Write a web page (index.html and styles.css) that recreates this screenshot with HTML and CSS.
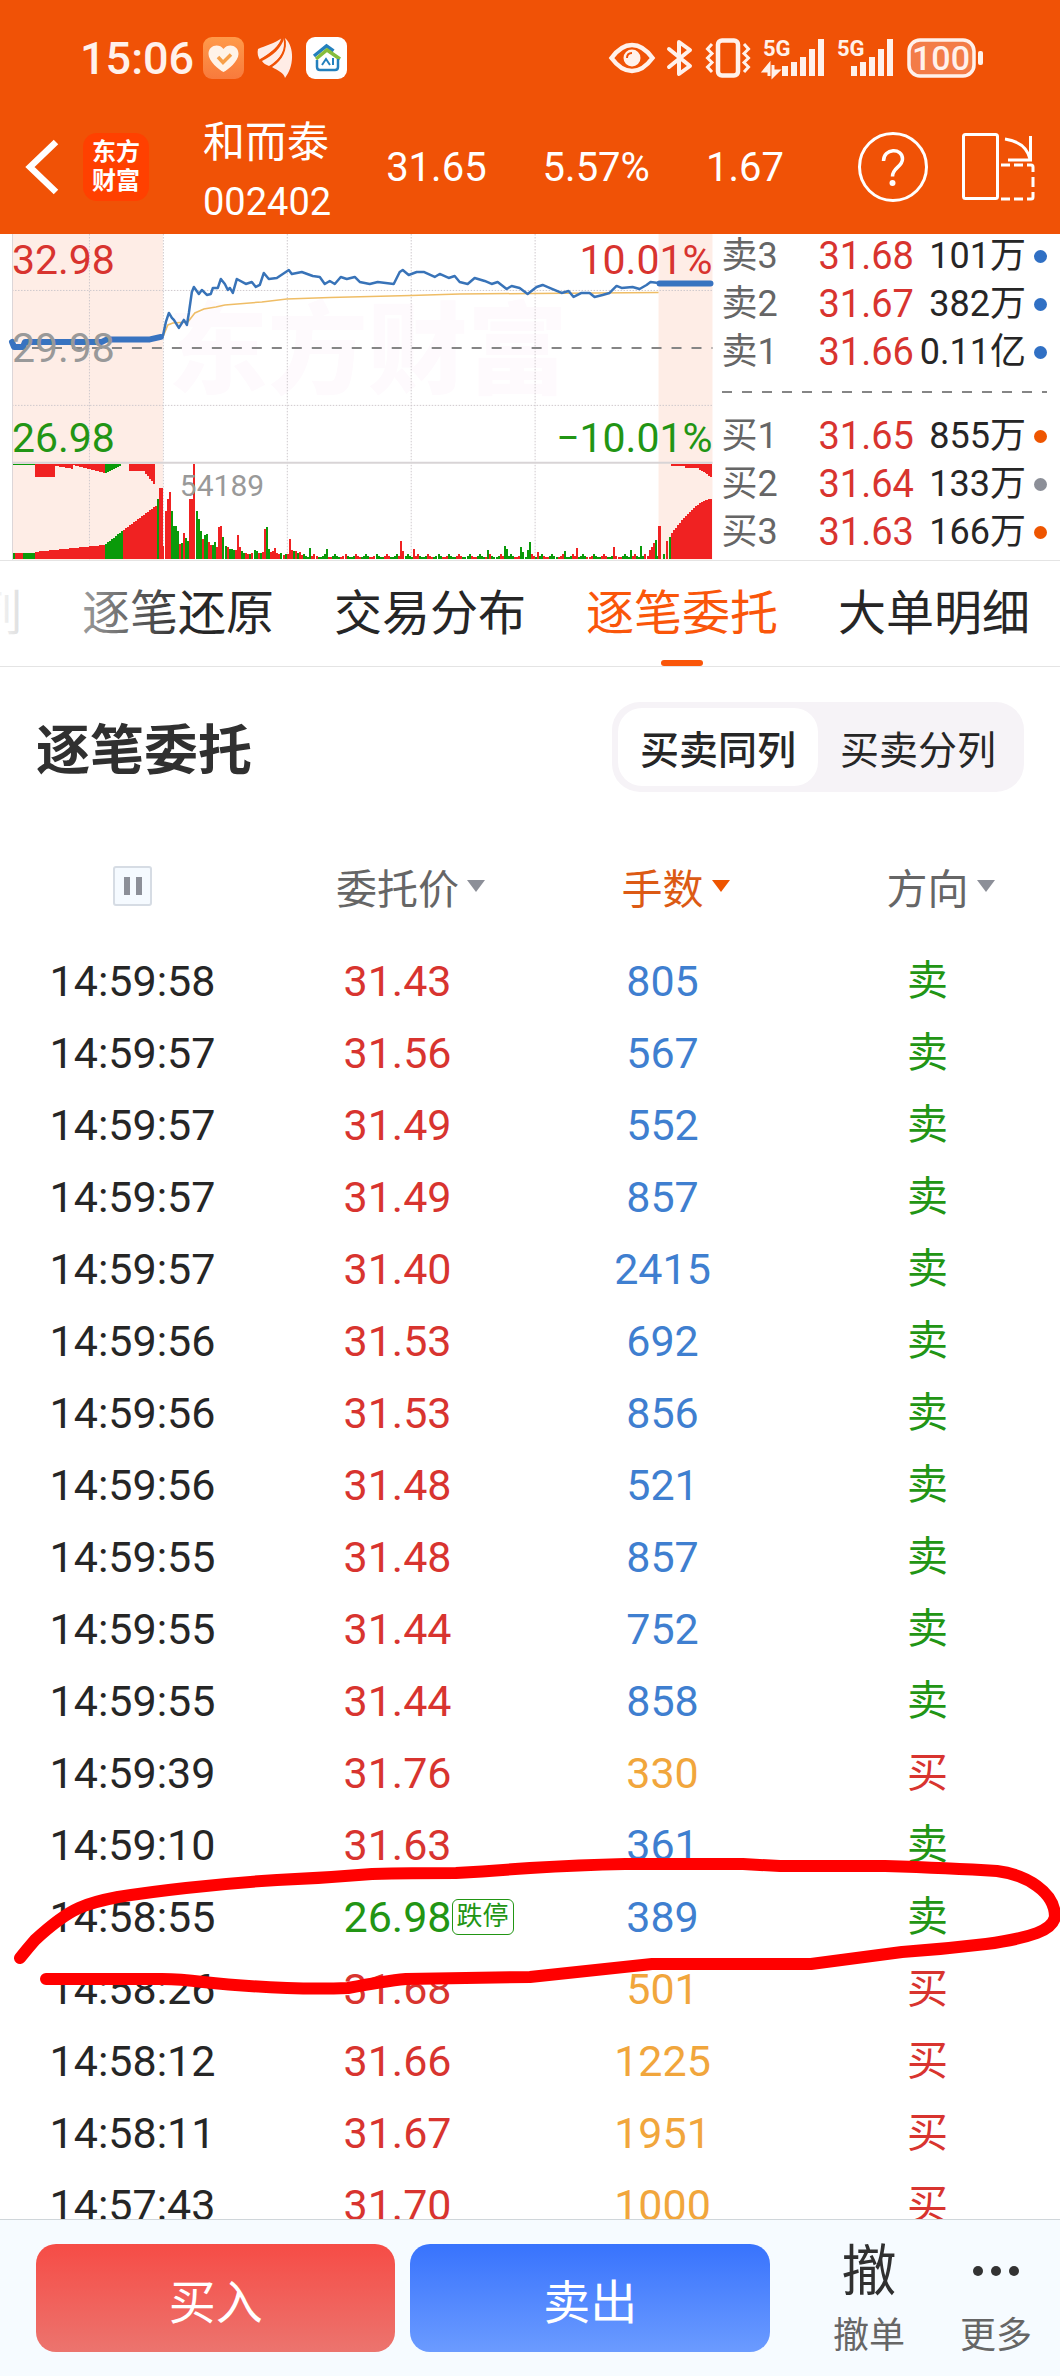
FILE: index.html
```html
<!DOCTYPE html>
<html lang="zh-Hans">
<head>
    <meta charset="UTF-8">
    <meta name="viewport" content="width=device-width, initial-scale=1.0">
    <title>和而泰 002402</title>
    <link rel="stylesheet" href="styles.css">
</head>
<body>
    <header class="top">
        <div class="status">
            <span class="clock">15:06</span>
            <div class="status-apps">
                <svg width="41" height="42" viewBox="0 0 41 42">
                    <defs>
                        <linearGradient id="heart-bg" x1="0" y1="0" x2="0" y2="1">
                            <stop offset="0" stop-color="#ff9a4a"/>
                            <stop offset="1" stop-color="#f87a3c"/>
                        </linearGradient>
                    </defs>
                    <rect width="41" height="42" rx="9" fill="url(#heart-bg)"/>
                    <path d="M20.500 35C16 33 5.500 24 5.500 17c0-9 10.500-11 15-5 4.500-6 15-4 15 5 0 7-10.500 16-15 18z" fill="#fff3e8"/>
                    <path d="M15 20l5 5.500 8-8" fill="none" stroke="#f7a04a" stroke-width="3.500"/>
                </svg>
                <svg width="36" height="42" viewBox="0 0 36 42">
                    <path d="M1 12C8 9 18 6 25 1c-2 8-12 15-22 22C1 20 0 16 1 12z" fill="#ffece6"/>
                    <path d="M5 24C15 19 25 11 27 1c4 9-3 21-15 28-3-1-6-3-7-5z" fill="#ffece6"/>
                    <path d="M15 30C26 23 31 12 28 1c10 9 9 29 0 40-1-5-8-8-13-11z" fill="#ffece6"/>
                    <path d="M3 23C14 17 23 10 25 1M13 30C24 23 30 12 27 1" fill="none" stroke="#f05206" stroke-width="1.500"/>
                </svg>
                <svg width="41" height="42" viewBox="0 0 41 42">
                    <rect width="41" height="42" rx="9" fill="#fff"/>
                    <path d="M8 19L20.500 9l7 5" fill="none" stroke="#2480bd" stroke-width="3.500"/>
                    <path d="M10 22l11-9 13 9" fill="none" stroke="#86bd3c" stroke-width="3.500"/>
                    <path d="M11 23v7q0 3 3 3h15q3 0 3-3v-8" fill="none" stroke="#2480bd" stroke-width="2.500"/>
                    <path d="M16 28l4-6 4 6M27 21v7" fill="none" stroke="#2480bd" stroke-width="2"/>
                </svg>
            </div>
            <div class="status-icons">
                <svg width="46" height="32" viewBox="0 0 46 32">
                    <path d="M2.500 16Q12 3 23 3t20.500 13Q34 29 23 29T2.500 16z" fill="none" stroke="#fff1eb" stroke-width="4.500"/>
                    <circle cx="23" cy="16" r="8.500" fill="#fff1eb"/>
                    <path d="M18 16q0-5 5-5" fill="none" stroke="#f05206" stroke-width="2"/>
                </svg>
                <svg width="26" height="38" viewBox="0 0 26 38">
                    <path d="M2 10l21 17-11 8V3l11 8L2 28" fill="none" stroke="#fff1eb" stroke-width="4" stroke-linejoin="round" stroke-linecap="round"/>
                </svg>
                <svg width="46" height="40" viewBox="0 0 46 40">
                    <rect x="13" y="2.500" width="20" height="35" rx="4" fill="none" stroke="#fff1eb" stroke-width="4.500"/>
                    <path d="M7 6L2.500 11 7 15.500 2.500 20 7 24.500 2.500 29 7 34M39 6l4.500 5-4.500 4.500 4.500 4.500-4.500 4.500 4.500 4.500-4.500 5" fill="none" stroke="#fff1eb" stroke-width="3"/>
                </svg>
                <svg width="62" height="40" viewBox="0 0 62 40">
                    <text class="net" x="0" y="18">5G</text>
                    <path d="M22 38V28M31 38V24M40 38V19M49 38V11M58 38V1" stroke="#fff1eb" stroke-width="6"/>
                    <path d="M6 38V27l-5 6h5M10 27v11l5-5h-5" fill="none" stroke="#fff1eb" stroke-width="3"/>
                </svg>
                <svg width="58" height="40" viewBox="0 0 58 40">
                    <text class="net" x="0" y="18">5G</text>
                    <path d="M17 38V28M26 38V24M35 38V19M44 38V11M53 38V1" stroke="#fff1eb" stroke-width="6"/>
                </svg>
                <svg width="77" height="40" viewBox="0 0 77 40">
                    <rect x="2" y="2" width="65" height="36" rx="11" fill="#f37c48" stroke="#fff1eb" stroke-width="3.500"/>
                    <rect x="71" y="13" width="5" height="14" rx="2" fill="#fff1eb"/>
                    <text class="battery" x="34" y="32" text-anchor="middle">100</text>
                </svg>
            </div>
        </div>
        <nav class="stock-bar">
            <button class="icon-btn" aria-label="返回">
                <svg width="34" height="56" viewBox="0 0 34 56"><path d="M31 3L5 28l26 25" fill="none" stroke="#fff" stroke-width="6.500"/></svg>
            </button>
            <a class="brand" href="#">东方<br>财富</a>
            <h1 class="stock">和而泰<br><span class="code">002402</span></h1>
            <div class="quote">
                <span>31.65</span>
                <span>5.57%</span>
                <span>1.67</span>
            </div>
            <button class="icon-btn help" aria-label="帮助">
                <svg width="70" height="70" viewBox="0 0 70 70">
                    <circle cx="35" cy="35" r="33.500" fill="none" stroke="#fff" stroke-width="3"/>
                    <path d="M25.500 29c0-13 19-13.500 19-2 0 8-10 8.500-10 17.500" fill="none" stroke="#fff" stroke-width="3.500"/>
                    <circle cx="34.500" cy="51" r="3" fill="#fff"/>
                </svg>
            </button>
            <button class="icon-btn" aria-label="横屏">
                <svg width="73" height="68" viewBox="0 0 73 68" fill="none" stroke="#fff" stroke-width="3">
                    <rect x="1.500" y="1.500" width="34" height="64" rx="2"/>
                    <path d="M43 6q21 3 25 20M68.500 3v24H46"/>
                    <path d="M39 32h9m4 0h9m4 0h4q2 0 2 2v5m0 5v10m0 5v5q0 2-2 2h-4m-4 0h-9m-4 0h-9"/>
                </svg>
            </button>
        </nav>
    </header>

    <section class="market">
        <svg class="chart" viewBox="0 -4 716 326">
            <rect x="12" y="-4" width="151" height="326" fill="#feede6"/>
            <rect x="659" y="-4" width="54" height="326" fill="#feede6"/>
            <text class="watermark" x="168" y="148">东方财富</text>
            <path d="M89.500-4v326M163.500-4v326M287.500-4v326M411.500-4v326M535.500-4v326M12 52.500h701M12 167.500h701" stroke="#cfc9cd" stroke-dasharray="1.500 1.500" fill="none"/>
            <path d="M12.500-4v326" stroke="#dcd6d8"/>
            <path d="M12 110h701" stroke="#858585" stroke-width="2" stroke-dasharray="10 10"/>
            <path d="M12 225h701" stroke="#d8d4d6" stroke-width="2"/>
            <g id="volume" shape-rendering="crispEdges"></g>
            <path d="M163 99L168 87 173 85 188 84 195 75 204 71 216 69 225 67 262 64 287 61 330 59.500 411 57.500 460 56 535 55.500 659 54.500" fill="none" stroke="#efbd66" stroke-width="1.500"/>
            <path id="price-line" fill="none" stroke="#3873b8" stroke-width="2.500" stroke-linejoin="round"/>
            <path d="M12 104L14 109H23L25 104H102L107 101.500H150L161 99M660 45.500H711" fill="none" stroke="#3873c0" stroke-width="6" stroke-linecap="round" stroke-linejoin="round"/>
            <text class="axis up" x="12" y="36">32.98</text>
            <text class="axis flat" x="12" y="124">29.98</text>
            <text class="axis down" x="12" y="214">26.98</text>
            <text class="axis up" x="713" y="36" text-anchor="end">10.01%</text>
            <text class="axis down" x="713" y="214" text-anchor="end">−10.01%</text>
            <text class="axis-small" x="180" y="258">54189</text>
        </svg>
        <div class="book">
            <ul>
                <li><span>卖3</span><b>31.68</b><em>101万</em><i class="dot blue"></i></li>
                <li><span>卖2</span><b>31.67</b><em>382万</em><i class="dot blue"></i></li>
                <li><span>卖1</span><b>31.66</b><em>0.11亿</em><i class="dot blue"></i></li>
            </ul>
            <div class="split"></div>
            <ul>
                <li><span>买1</span><b>31.65</b><em>855万</em><i class="dot orange"></i></li>
                <li><span>买2</span><b>31.64</b><em>133万</em><i class="dot gray"></i></li>
                <li><span>买3</span><b>31.63</b><em>166万</em><i class="dot orange"></i></li>
            </ul>
        </div>
    </section>

    <nav class="tabs">
        <a href="#">列</a>
        <a href="#">逐笔还原</a>
        <a href="#">交易分布</a>
        <a href="#" class="active">逐笔委托</a>
        <a href="#">大单明细</a>
    </nav>

    <main class="orders">
        <div class="orders-head">
            <h2>逐笔委托</h2>
            <div class="switch">
                <button class="on">买卖同列</button>
                <button>买卖分列</button>
            </div>
        </div>
        <table>
            <thead>
                <tr>
                    <th><button class="pause" aria-label="暂停"></button></th>
                    <th><button class="sort">委托价</button></th>
                    <th><button class="sort active">手数</button></th>
                    <th><button class="sort">方向</button></th>
                </tr>
            </thead>
            <tbody id="order-rows"></tbody>
        </table>
        <!-- 手绘红圈 -->
        <svg class="mark" viewBox="0 0 1060 160">
            <path d="M20 108Q28 98 35 90 61 66 79 58 92 52 118 47 150 42 186 38 230 33 277 30 325 28 372 24 410 23 456 23 490 21 530 18 580 15 625 14H743L780 16H885Q950 18 997 21 1021 24 1037 36 1055 49 1055 67 1053 77 1037 83 1018 90 986 94 945 99 902 102L811 114H652L530 127 406 129Q385 131 348 138 320 139 287 138 240 136 203 132 180 129 162 129H46"/>
        </svg>
    </main>

    <footer class="actions">
        <button class="trade buy">买入</button>
        <button class="trade sell">卖出</button>
        <a class="action" href="#"><strong>撤</strong>撤单</a>
        <a class="action" href="#">
            <svg width="52" height="56" viewBox="0 0 52 56" fill="#333"><circle cx="8" cy="27" r="5"/><circle cx="26" cy="27" r="5"/><circle cx="44" cy="27" r="5"/></svg>
            更多
        </a>
    </footer>

    <script src="script.js"></script>
</body>
</html>
```
FILE: styles.css
```css
/* 全局 */
* {
    box-sizing: border-box;
}

body {
    margin: 0;
    height: 100vh;
    display: flex;
    flex-direction: column;
    font-family: Roboto, "Noto Sans CJK SC", sans-serif;
    color: #262626;
    background: #fff;
}

button {
    margin: 0;
    padding: 0;
    border: 0;
    background: none;
    font: inherit;
    color: inherit;
}

a {
    color: inherit;
    text-decoration: none;
}

svg {
    display: block;
    flex: none;
    overflow: visible;
}

/* 顶部 */
.top {
    flex: none;
    background: #f05206;
    color: #fff;
}

.status {
    display: flex;
    align-items: center;
    height: 100px;
    padding: 16px 76px 0 80px;
}

.clock {
    width: 123px;
    font-size: 45px;
    font-weight: 500;
    color: #fff1eb;
}

.status-apps {
    display: flex;
    gap: 13px;
}

.status-icons {
    display: flex;
    align-items: center;
    gap: 12px;
    margin-left: auto;
}

.net {
    font-size: 22px;
    font-weight: 700;
    fill: #fff1eb;
}

.battery {
    font-size: 34px;
    font-weight: 500;
    fill: #fff1eb;
}

.stock-bar {
    display: flex;
    align-items: center;
    height: 134px;
    padding: 0 25px;
}

.brand {
    margin-left: 24px;
    width: 66px;
    height: 68px;
    padding: 5px 0;
    border-radius: 14px;
    background: #ff4000;
    font-size: 24px;
    font-weight: 700;
    line-height: 29px;
    text-align: center;
}

.stock {
    margin: 0 0 0 54px;
    padding-top: 10px;
    font-size: 42px;
    font-weight: 400;
    line-height: 58px;
}

.code {
    font-size: 38px;
}

.quote {
    display: flex;
    gap: 56px;
    margin-left: 55px;
    font-size: 40px;
}

.help {
    margin-left: auto;
    margin-right: 34px;
}

/* 分时图与盘口 */
.market {
    flex: none;
    display: flex;
    border-bottom: 1px solid #e4e4e4;
}

.chart {
    width: 67.5%;
    overflow: hidden;
}

.axis {
    font-size: 41px;
}

.axis-small {
    font-size: 30px;
    fill: #999;
}

.watermark {
    font-size: 100px;
    font-weight: 900;
    fill: #fefafd;
}

.up { fill: #d8342f; }
.down { fill: #229514; }
.flat { fill: #999; }

.book {
    flex: 1;
    padding: 4px 13px 0 6px;
}

.book ul {
    list-style: none;
    margin: 0;
    padding: 0;
    display: grid;
    gap: 12px;
}

.book li {
    display: flex;
    align-items: center;
    height: 36px;
    line-height: 36px;
    font-size: 36px;
}

.book span {
    width: 97px;
    color: #666;
}

.book b {
    font-size: 38px;
    font-weight: 400;
    color: #d8342f;
}

.book em {
    flex: 1;
    text-align: right;
    font-style: normal;
    white-space: nowrap;
}

.dot {
    width: 13px;
    height: 13px;
    margin-left: 8px;
    border-radius: 50%;
}

.blue { background: #3070c4; }
.orange { background: #ee5500; }
.gray { background: #8c8f98; }

.split {
    height: 2px;
    margin: 21px 0 25px;
    background: repeating-linear-gradient(90deg, #858585 0 10px, transparent 10px 20px);
}

/* 标签栏 */
.tabs {
    flex: none;
    position: relative;
    display: flex;
    justify-content: flex-end;
    gap: 60px;
    height: 106px;
    padding-right: 30px;
    overflow: hidden;
    border-bottom: 1px solid #e4e4e4;
    font-size: 48px;
    line-height: 105px;
    white-space: nowrap;
}

/* 左侧渐隐 */
.tabs::before {
    content: "";
    position: absolute;
    z-index: 1;
    inset: 0 auto 0 0;
    width: 190px;
    background: linear-gradient(90deg, rgba(255, 255, 255, 0.95), rgba(255, 255, 255, 0));
}

.tabs .active {
    position: relative;
    color: #fa560a;
}

.tabs .active::after {
    content: "";
    position: absolute;
    bottom: 0;
    left: 50%;
    width: 42px;
    height: 6px;
    margin-left: -21px;
    border-radius: 3px;
    background: #fa560a;
}

/* 逐笔委托 */
.orders {
    flex: 1;
    min-height: 0;
    position: relative;
    overflow: hidden;
}

.orders-head {
    display: flex;
    align-items: center;
    justify-content: space-between;
    height: 160px;
    padding: 0 36px;
}

.orders-head h2 {
    margin: 0;
    font-size: 54px;
    font-weight: 700;
    color: #303030;
}

.switch {
    display: flex;
    padding: 6px;
    border-radius: 28px;
    background: #f6f3f7;
    font-size: 39px;
}

.switch button {
    height: 78px;
    padding: 0 22px;
    border-radius: 24px;
}

.switch .on {
    background: #fff;
    font-weight: 500;
}

table {
    width: 100%;
    table-layout: fixed;
    border-collapse: collapse;
    text-align: center;
    font-size: 43px;
}

th {
    height: 118px;
    padding: 0;
    font-size: 41px;
    font-weight: 400;
    color: #666;
}

td {
    height: 72px;
    padding: 0;
    line-height: 72px;
}

.pause {
    display: block;
    width: 39px;
    height: 40px;
    margin: 0 auto;
    border: 2px solid #d6dce4;
    border-radius: 3px;
    background: linear-gradient(#8c8f98, #8c8f98) 9px 9px / 6px 18px no-repeat,
        linear-gradient(#8c8f98, #8c8f98) 21px 9px / 6px 18px no-repeat, #f5faff;
}

.sort {
    position: relative;
}

.sort::after {
    content: "";
    position: absolute;
    left: 100%;
    top: 50%;
    margin: -6px 0 0 8px;
    border: 9px solid transparent;
    border-top: 12px solid #8c8f98;
    border-bottom: 0;
}

.sort.active {
    color: #dc5a14;
}

.sort.active::after {
    border-top-color: #ee5500;
}

.price-up { color: #d8342f; }
.price-down { color: #229514; }
.small { color: #3f7fd0; }
.big { color: #f1a63c; }

.price {
    position: relative;
}

.limit {
    position: absolute;
    left: 100%;
    top: 50%;
    width: 62px;
    height: 36px;
    margin-top: -18px;
    border: 1px solid #229514;
    border-radius: 6px;
    font-size: 26px;
    line-height: 33px;
}

.side {
    font-size: 41px;
}

.mark {
    position: absolute;
    top: 1183px;
    left: 0;
    width: 100%;
    pointer-events: none;
}

.mark path {
    fill: none;
    stroke: #f00;
    stroke-width: 12;
    stroke-linecap: round;
    stroke-linejoin: round;
}

/* 底部操作栏 */
.actions {
    flex: none;
    display: flex;
    align-items: flex-start;
    padding: 24px 28px 18px 36px;
    border-top: 1px solid #d0d6da;
    background: #f6fbff;
}

.trade {
    flex: 1;
    height: 108px;
    border-radius: 20px;
    font-size: 47px;
    color: #fff;
}

.buy {
    margin-right: 15px;
    background: linear-gradient(#f64c46, #ec746e);
}

.sell {
    margin-right: 8px;
    background: linear-gradient(#3873fd, #6b9bff);
}

.action {
    display: flex;
    flex-direction: column;
    align-items: center;
    margin-left: 55px;
    font-size: 36px;
    line-height: 44px;
    color: #666;
}

.action strong {
    height: 70px;
    font-size: 55px;
    font-weight: 400;
    line-height: 54px;
    color: #303030;
}

.action svg {
    margin-bottom: 14px;
}
```
FILE: script.js
```js
const orders = [
    ['14:59:58', '31.43', 805, '卖'],
    ['14:59:57', '31.56', 567, '卖'],
    ['14:59:57', '31.49', 552, '卖'],
    ['14:59:57', '31.49', 857, '卖'],
    ['14:59:57', '31.40', 2415, '卖'],
    ['14:59:56', '31.53', 692, '卖'],
    ['14:59:56', '31.53', 856, '卖'],
    ['14:59:56', '31.48', 521, '卖'],
    ['14:59:55', '31.48', 857, '卖'],
    ['14:59:55', '31.44', 752, '卖'],
    ['14:59:55', '31.44', 858, '卖'],
    ['14:59:39', '31.76', 330, '买'],
    ['14:59:10', '31.63', 361, '卖'],
    ['14:58:55', '26.98', 389, '卖'],
    ['14:58:26', '31.68', 501, '买'],
    ['14:58:12', '31.66', 1225, '买'],
    ['14:58:11', '31.67', 1951, '买'],
    ['14:57:43', '31.70', 1000, '买']
];

document.getElementById('order-rows').innerHTML = orders.map(([time, price, lots, side]) => {
    const limit = price === '26.98';
    const sell = side === '卖';
    return `<tr>
        <td>${time}</td>
        <td class="${limit ? 'price-down' : 'price-up'}"><span class="price">${price}${limit ? '<span class="limit">跌停</span>' : ''}</span></td>
        <td class="${sell ? 'small' : 'big'}">${lots}</td>
        <td class="side ${sell ? 'price-down' : 'price-up'}">${side}</td>
    </tr>`;
}).join('');

// 分时价格线
const points = [163, 98, 166, 84, 169, 75, 172, 80, 174, 82, 179, 90, 184, 82, 187, 87, 189, 75, 192, 54, 194, 49,
    199, 56, 202, 52, 207, 57, 211, 56, 213, 50, 218, 50, 221, 41, 225, 46, 228, 52, 230, 50, 233, 55, 237, 41,
    246, 46, 252, 44, 256, 49, 260, 47, 264, 35, 269, 41, 277, 40, 283, 36, 289, 32, 292, 36, 302, 34, 313, 38,
    320, 39, 325, 46, 330, 43, 335, 46, 341, 39, 347, 41, 355, 39, 360, 44, 370, 46, 378, 44, 394, 46, 400, 34,
    403, 32, 409, 37, 417, 34, 424, 34, 435, 39, 440, 36, 449, 40, 455, 38, 460, 44, 468, 46, 475, 40, 485, 43,
    492, 46, 498, 44, 507, 51, 512, 48, 520, 50, 528, 56, 537, 49, 543, 47, 550, 50, 562, 55, 569, 53, 574, 59,
    582, 55, 590, 55, 595, 59, 603, 57, 610, 55, 617, 48, 622, 50, 633, 49, 640, 51, 647, 47, 651, 44, 659, 45];
document.getElementById('price-line').setAttribute('d', 'M' + points.join(' '));

// 成交量：正数为红，负数为绿
const red = '#f02222';
const green = '#0a9a0a';
const base = 321;
const top0 = 226;
let bars = '';

function bar(x, y, h, color, w = 2) {
    bars += `<rect x="${x.toFixed(1)}" y="${y.toFixed(1)}" width="${w}" height="${h.toFixed(1)}" fill="${color}"/>`;
}

// 开盘集合竞价
for (let x = 13; x < 162; x += 2) {
    let h, color = red;
    if (x < 35) { h = 6; color = x < 15 || x > 22 ? green : red; }
    else if (x < 104) h = 7 + (x - 35) / 10;
    else if (x < 123) { h = 14 + (x - 104) * 0.8; color = green; }
    else h = 29 + (x - 123) * 0.75;
    if (x === 157) { h = 60; color = green; }
    if (x > 158) h = 71;
    bar(x, base - h, h, color);

    let d = 0;
    if (x < 35) d = 1;
    else if (x < 54) d = 13;
    else if (x < 72) d = 2 + (x - 54) / 6;
    else if (x < 104) d = 1 + (x - 72) / 4;
    else if (x < 120) d = 10 - (x - 104) / 2;
    else if (x > 128 && x < 155) d = x < 144 ? 7 : 9 + (x - 144) * 1.2;
    bar(x, top0, d, x < 35 || (x >= 104 && x < 120) ? green : red);
}

// 盘中
const open = [13, 48, 60, 67, -48, -33, -33, -28, 15, -16, 26, -21, -18, 60, 60, 95, -48, -40, -28, 20, -24, -25, 17,
    14, -14, -17, 12, 32, 33, -22, -13, 12, -10, -10, -9, 9, 24, 12, -8, -6, 6, 5, -5, 6, -9, -8, 6, -6, 7, 30, -32,
    -10, 7, 8, 11, 6, 5, -6, 4, -5, 5, 20, 9, -8, 8, -6, 7, 4];
const spikes = { 71: -11, 79: -10, 115: 18, 116: 8, 121: 10, 157: -9, 165: -13, 166: -10, 173: -12, 174: -7,
    176: -9, 177: -17, 181: 7, 194: -8, 200: 11, 218: 12, 226: -9, 231: -13, 235: 9, 236: 12, 237: 16, 238: -19 };
for (let i = 0; i < 240; i++) {
    const noise = 2 + (i * 7 + i * i * 3) % 5;
    const v = open[i] || spikes[i] || ((i * i + i) % 7 < 3 ? -noise : noise);
    bar(162.6 + i * 2.07, base - Math.abs(v), Math.abs(v), v > 0 ? red : green);
}

// 收盘集合竞价
bar(658, base - 33, 33, red, 3);
bar(663, base - 5, 5, green);
bar(666, base - 18, 18, red);
bar(669, base - 22, 22, green);
for (let x = 671; x < 712; x += 2) {
    const h = 26 + 34 * Math.sin((x - 671) / 40 * 1.5);
    bar(x, base - h, h, red);
    bar(x, top0, x < 684 ? 2 : 4 + Math.max(0, x - 696) * 0.6, red);
}

document.getElementById('volume').innerHTML = bars;
```
